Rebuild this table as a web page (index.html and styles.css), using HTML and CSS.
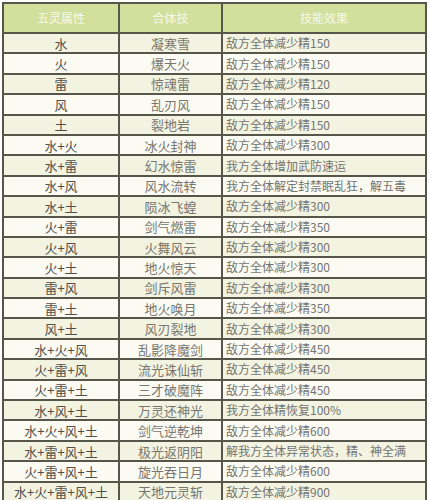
FILE: index.html
```html
<!DOCTYPE html>
<html lang="zh">
<head>
<meta charset="utf-8">
<link rel="stylesheet" href="styles.css">
</head>
<body>
<div class="table">
  <div class="cell head">五灵属性</div><div class="cell head">合体技</div><div class="cell head">技能效果</div>
  <div class="row odd"><div class="cell c1">水</div><div class="cell c2">凝寒雪</div><div class="cell c3">敌方全体减少精150</div></div>
  <div class="row"><div class="cell c1">火</div><div class="cell c2">爆天火</div><div class="cell c3">敌方全体减少精150</div></div>
  <div class="row odd"><div class="cell c1">雷</div><div class="cell c2">惊魂雷</div><div class="cell c3">敌方全体减少精120</div></div>
  <div class="row"><div class="cell c1">风</div><div class="cell c2">乱刃风</div><div class="cell c3">敌方全体减少精150</div></div>
  <div class="row odd"><div class="cell c1">土</div><div class="cell c2">裂地岩</div><div class="cell c3">敌方全体减少精150</div></div>
  <div class="row"><div class="cell c1">水+火</div><div class="cell c2">冰火封神</div><div class="cell c3">敌方全体减少精300</div></div>
  <div class="row odd"><div class="cell c1">水+雷</div><div class="cell c2">幻水惊雷</div><div class="cell c3">我方全体增加武防速运</div></div>
  <div class="row"><div class="cell c1">水+风</div><div class="cell c2">风水流转</div><div class="cell c3">我方全体解定封禁眠乱狂，解五毒</div></div>
  <div class="row odd"><div class="cell c1">水+土</div><div class="cell c2">陨冰飞蝗</div><div class="cell c3">敌方全体减少精300</div></div>
  <div class="row"><div class="cell c1">火+雷</div><div class="cell c2">剑气燃雷</div><div class="cell c3">敌方全体减少精350</div></div>
  <div class="row odd"><div class="cell c1">火+风</div><div class="cell c2">火舞风云</div><div class="cell c3">敌方全体减少精300</div></div>
  <div class="row"><div class="cell c1">火+土</div><div class="cell c2">地火惊天</div><div class="cell c3">敌方全体减少精300</div></div>
  <div class="row odd"><div class="cell c1">雷+风</div><div class="cell c2">剑斥风雷</div><div class="cell c3">敌方全体减少精300</div></div>
  <div class="row"><div class="cell c1">雷+土</div><div class="cell c2">地火唤月</div><div class="cell c3">敌方全体减少精350</div></div>
  <div class="row odd"><div class="cell c1">风+土</div><div class="cell c2">风刃裂地</div><div class="cell c3">敌方全体减少精300</div></div>
  <div class="row"><div class="cell c1">水+火+风</div><div class="cell c2">乱影降魔剑</div><div class="cell c3">敌方全体减少精450</div></div>
  <div class="row odd"><div class="cell c1">火+雷+风</div><div class="cell c2">流光诛仙斩</div><div class="cell c3">敌方全体减少精450</div></div>
  <div class="row"><div class="cell c1">火+雷+土</div><div class="cell c2">三才破魔阵</div><div class="cell c3">敌方全体减少精450</div></div>
  <div class="row odd"><div class="cell c1">水+风+土</div><div class="cell c2">万灵还神光</div><div class="cell c3">我方全体精恢复100%</div></div>
  <div class="row"><div class="cell c1">水+火+风+土</div><div class="cell c2">剑气逆乾坤</div><div class="cell c3">敌方全体减少精600</div></div>
  <div class="row odd"><div class="cell c1">水+雷+风+土</div><div class="cell c2">极光返阴阳</div><div class="cell c3">解我方全体异常状态，精、神全满</div></div>
  <div class="row"><div class="cell c1">火+雷+风+土</div><div class="cell c2">旋光吞日月</div><div class="cell c3">敌方全体减少精600</div></div>
  <div class="row odd"><div class="cell c1">水+火+雷+风+土</div><div class="cell c2">天地元灵斩</div><div class="cell c3">敌方全体减少精900</div></div>
</div>
</body>
</html>
```

FILE: styles.css
```css
html, body {
  margin: 0;
  padding: 0;
  background: #ffffff;
  overflow: hidden;
}
body {
  padding: 2px 0 0 2px;
  font-family: "Noto Sans CJK SC", "Noto Sans", sans-serif;
}
.table {
  width: 425px;
  display: grid;
  grid-template-columns: 114px 101px 202px;
  grid-auto-rows: 18.4px;
  grid-template-rows: 28px;
  gap: 2px;
  padding: 2px;
  box-sizing: border-box;
  background: #56564a;
}
.row {
  display: contents;
}
.cell {
  display: flex;
  align-items: center;
  font-size: 13px;
  line-height: 1;
  color: #6a6a66;
  background: #fbfbf4;
  white-space: nowrap;
  overflow: hidden;
}
.row.odd .cell {
  background: #f3f3e2;
}
.head {
  background: #d3df9c;
  color: #f6f9ea;
  justify-content: center;
  font-size: 12px;
}
.c1 {
  justify-content: center;
  color: #4e4e4a;
}
.c2 {
  justify-content: center;
  color: #77776f;
}
.c3 {
  padding-left: 3px;
  font-size: 12px;
  color: #747471;
}
```
